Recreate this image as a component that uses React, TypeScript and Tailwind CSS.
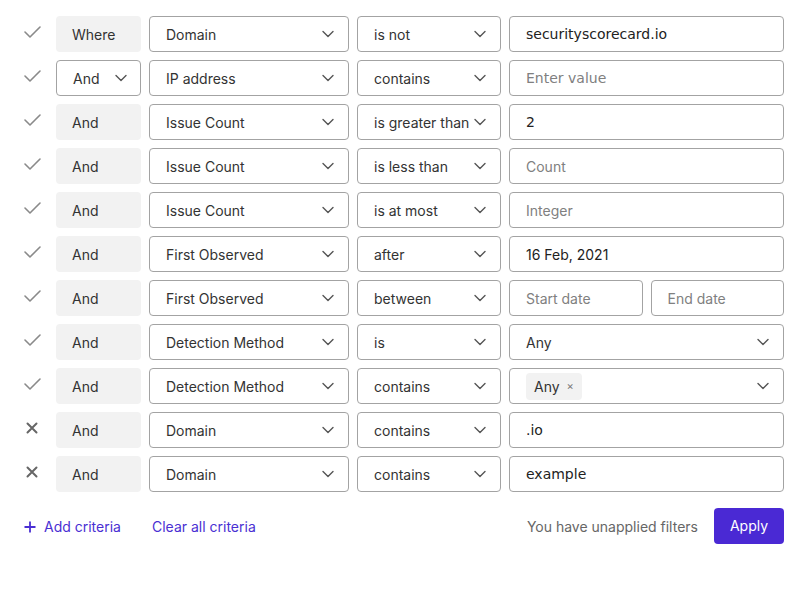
import React from 'react';

type Row = {
  ok: boolean;
  conj: 'where' | 'select' | 'static';
  field: string;
  op: string;
  value:
    | { kind: 'text'; text: string; inter?: boolean }
    | { kind: 'placeholder'; text: string; inter?: boolean }
    | { kind: 'range' }
    | { kind: 'select'; text: string }
    | { kind: 'tags'; tags: string[] };
};

const rows: Row[] = [
  { ok: true, conj: 'where', field: 'Domain', op: 'is not', value: { kind: 'text', text: 'securityscorecard.io' } },
  { ok: true, conj: 'select', field: 'IP address', op: 'contains', value: { kind: 'placeholder', text: 'Enter value' } },
  { ok: true, conj: 'static', field: 'Issue Count', op: 'is greater than', value: { kind: 'text', text: '2' } },
  { ok: true, conj: 'static', field: 'Issue Count', op: 'is less than', value: { kind: 'placeholder', text: 'Count', inter: true } },
  { ok: true, conj: 'static', field: 'Issue Count', op: 'is at most', value: { kind: 'placeholder', text: 'Integer', inter: true } },
  { ok: true, conj: 'static', field: 'First Observed', op: 'after', value: { kind: 'text', text: '16 Feb, 2021', inter: true } },
  { ok: true, conj: 'static', field: 'First Observed', op: 'between', value: { kind: 'range' } },
  { ok: true, conj: 'static', field: 'Detection Method', op: 'is', value: { kind: 'select', text: 'Any' } },
  { ok: true, conj: 'static', field: 'Detection Method', op: 'contains', value: { kind: 'tags', tags: ['Any'] } },
  { ok: false, conj: 'static', field: 'Domain', op: 'contains', value: { kind: 'text', text: '.io' } },
  { ok: false, conj: 'static', field: 'Domain', op: 'contains', value: { kind: 'text', text: 'example' } },
];

const inter = "font-['Inter','Noto_Sans',sans-serif]";
const dejavu = "font-['DejaVu_Sans',sans-serif]";

const Chevron = () => (
  <svg width="12" height="8" viewBox="0 0 12 8" fill="none" className="shrink-0">
    <polyline points="1,1.5 6,6.5 11,1.5" stroke="#555" strokeWidth="1.4" strokeLinecap="round" strokeLinejoin="round" />
  </svg>
);

const CheckIcon = () => (
  <svg width="17" height="12" viewBox="0 0 17 12" fill="none">
    <polyline points="1,6 6,11 16,1" stroke="#8a8a8a" strokeWidth="1.6" strokeLinecap="round" strokeLinejoin="round" />
  </svg>
);

const XIcon = () => (
  <svg width="12" height="12" viewBox="0 0 12 12" fill="none">
    <path d="M1.5 1.5 L10.5 10.5 M10.5 1.5 L1.5 10.5" stroke="#666" strokeWidth="2" strokeLinecap="round" />
  </svg>
);

const box = 'h-9 rounded border border-[#a3a3a3] bg-white flex items-center';

const Field = ({ value }: { value: Row['value'] }) => {
  if (value.kind === 'range') {
    return (
      <div className="flex-1 flex gap-2">
        <div className={`${box} flex-1 pl-4 pt-px text-sm text-[#808080] ${inter}`}>Start date</div>
        <div className={`${box} flex-1 pl-4 pt-px text-sm text-[#808080] ${inter}`}>End date</div>
      </div>
    );
  }
  if (value.kind === 'select') {
    return (
      <div className={`${box} flex-1 pl-4 pr-[14px] justify-between text-sm text-[#333] ${inter}`}>
        <span className="pt-px">{value.text}</span>
        <Chevron />
      </div>
    );
  }
  if (value.kind === 'tags') {
    return (
      <div className={`${box} flex-1 pl-4 pr-[14px] justify-between`}>
        {value.tags.map((t) => (
          <span key={t} className={`h-[27px] px-2 pt-px rounded bg-[#f2f2f2] flex items-center gap-[7px] text-sm text-[#333] ${inter}`}>
            {t}
            <span className="text-[11px] text-[#777] leading-none">×</span>
          </span>
        ))}
        <Chevron />
      </div>
    );
  }
  if (value.kind === 'placeholder') {
    return (
      <div className={`${box} flex-1 pl-4 text-[#808080] ${value.inter ? `pt-px text-sm ${inter}` : `text-sm ${dejavu}`}`}>
        {value.text}
      </div>
    );
  }
  return (
    <div className={`${box} flex-1 pl-4 text-sm text-[#222] ${value.inter ? `pt-px ${inter}` : dejavu}`}>{value.text}</div>
  );
};

const CriteriaRow = ({ row }: { row: Row }) => (
  <div className="flex gap-2 h-9">
    <div className="w-8 h-9 flex items-center justify-center pb-1">
      {row.ok ? <CheckIcon /> : <XIcon />}
    </div>
    {row.conj === 'select' ? (
      <div className={`${box} w-[85px] pl-4 pr-[13px] justify-between text-sm text-[#333] ${inter}`}>
        <span className="pt-px">And</span>
        <Chevron />
      </div>
    ) : (
      <div className={`h-9 w-[85px] rounded bg-[#f2f2f2] flex items-center pl-4 pt-px text-sm text-[#333] ${inter}`}>
        {row.conj === 'where' ? 'Where' : 'And'}
      </div>
    )}
    <div className={`${box} w-[200px] pl-4 pr-[14px] justify-between text-sm text-[#333] ${inter}`}>
      <span className="pt-px">{row.field}</span>
      <Chevron />
    </div>
    <div className={`${box} w-[144px] pl-4 pr-[14px] justify-between text-sm text-[#333] ${inter}`}>
      <span className="pt-0.5 whitespace-nowrap">{row.op}</span>
      <Chevron />
    </div>
    <Field value={row.value} />
  </div>
);

export default function App() {
  return (
    <div className="w-[800px] h-[600px] bg-white p-4">
      <div className="flex flex-col gap-2">
        {rows.map((r, i) => (
          <CriteriaRow key={i} row={r} />
        ))}
      </div>
      <div className={`mt-4 h-9 flex items-center ${inter}`}>
        <button className="flex items-center gap-2 ml-2 pt-px text-sm text-[#4a2fd3]">
          <svg width="12" height="12" viewBox="0 0 12 12" fill="none">
            <path d="M6 0.5 V11.5 M0.5 6 H11.5" stroke="#4a2fd3" strokeWidth="1.8" />
          </svg>
          Add criteria
        </button>
        <button className="ml-[31px] pt-px text-sm text-[#4a2fd3]">Clear all criteria</button>
        <span className="ml-auto pt-px text-sm text-[#666]">You have unapplied filters</span>
        <button className="ml-4 h-9 w-[70px] rounded bg-[#4a29d4] text-white text-sm">Apply</button>
      </div>
    </div>
  );
}
